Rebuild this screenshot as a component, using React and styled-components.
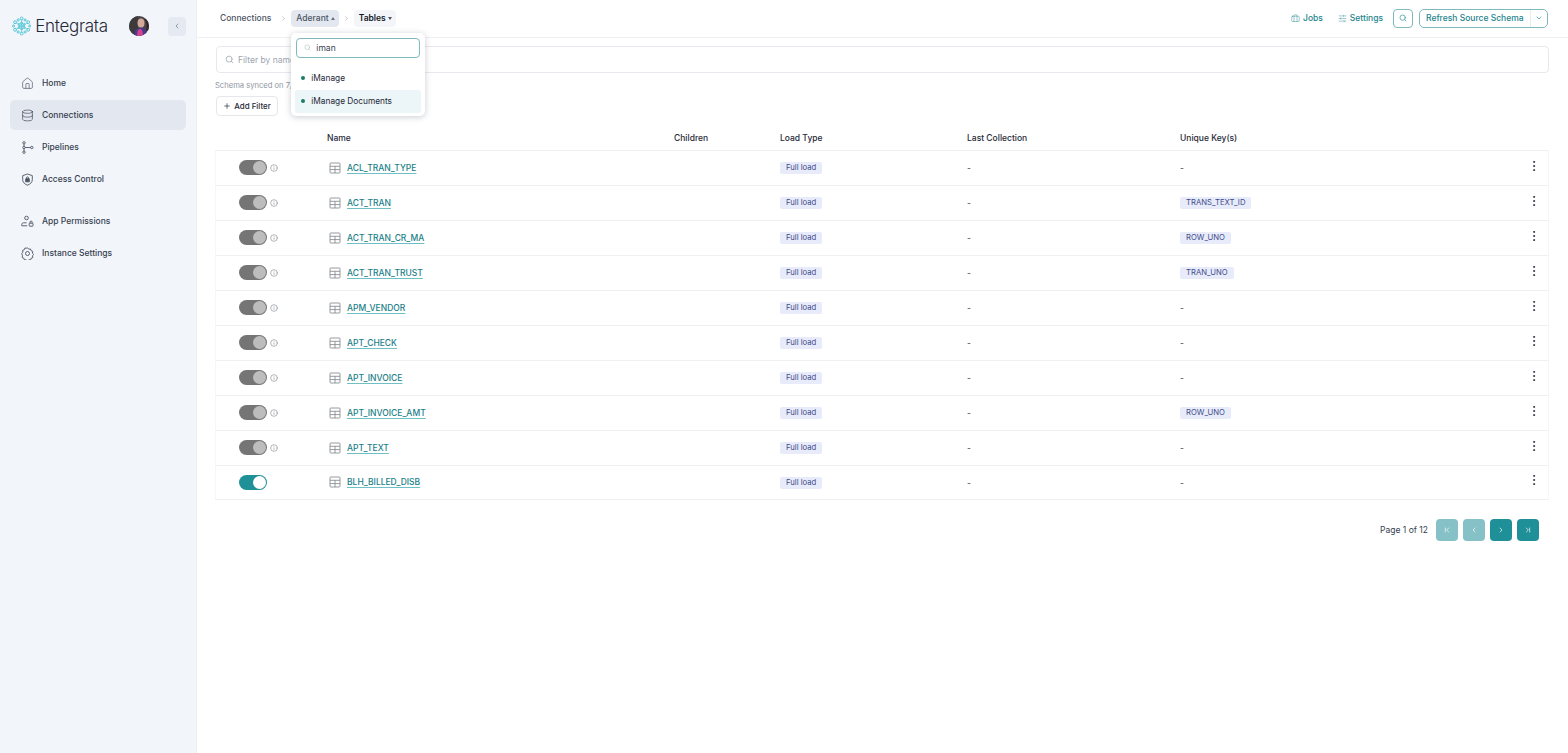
import React from "react";
import styled, { createGlobalStyle } from "styled-components";
import {
  Home,
  Database,
  ChevronLeft,
  ChevronRight,
  ChevronDown,
  ChevronFirst,
  ChevronLast,
  Search,
  Plus,
  Info,
  Briefcase,
  SlidersHorizontal,
  EllipsisVertical,
} from "lucide-react";

const GlobalStyle = createGlobalStyle`
  html, body { margin: 0; padding: 0; height: 100%; }
  body { font-family: Inter, "Liberation Sans", sans-serif; background: #fff; color: #1f2937; }
  #root { height: 100%; }
  * { box-sizing: border-box; }
`;

const Page = styled.div`
  display: flex;
  height: 753px;
  overflow: hidden;
`;

const Sidebar = styled.aside`
  width: 197px;
  flex: none;
  background: #f2f5fa;
  border-right: 1px solid #eceff4;
  padding: 14px 10px 0;
`;

const Brand = styled.div`
  display: flex;
  align-items: center;
  height: 24px;
  margin: 0 0 0 2px;
`;

const BrandName = styled.span`
  font-size: 17px;
  font-weight: 300;
  color: #1f2937;
  margin: -1px 0 0 4px;
  letter-spacing: -0.3px;
`;

const Avatar = styled.svg`
  width: 20px;
  height: 20px;
  margin-left: 21px;
  border-radius: 50%;
  flex: none;
`;

const Collapse = styled.button`
  width: 19px;
  height: 19px;
  margin-left: 19px;
  border: 0;
  border-radius: 4px;
  background: #e5e9f1;
  color: #6b7280;
  display: flex;
  align-items: center;
  justify-content: center;
  padding: 0;
`;

const Nav = styled.nav`
  margin-top: 30px;
  display: flex;
  flex-direction: column;
  gap: 2px;
`;

const NavItem = styled.a`
  display: flex;
  align-items: center;
  height: 30px;
  padding-left: 11px;
  gap: 8px;
  border-radius: 5px;
  font-size: 8.5px;
  font-weight: 500;
  color: #374151;
  background: ${(p) => (p.$active ? "#e3e7f0" : "transparent")};
`;

const NavDivider = styled.div`
  height: 8px;
`;

const Main = styled.main`
  flex: 1;
  min-width: 0;
  display: flex;
  flex-direction: column;
`;

const Topbar = styled.header`
  height: 38px;
  flex: none;
  border-bottom: 1px solid #eef0f3;
  display: flex;
  align-items: center;
  padding: 0 20px 1px 18px;
`;

const Crumbs = styled.div`
  display: flex;
  align-items: center;
  font-size: 8.5px;
  font-weight: 500;
`;

const CrumbLink = styled.span`
  padding: 0 5px;
  color: #4b5563;
`;

const CrumbSep = styled.span`
  display: flex;
  width: 15px;
  justify-content: center;
  color: #9ca3af;
`;

const CrumbMenu = styled.div`
  position: relative;
`;

const CrumbButton = styled.span`
  display: flex;
  align-items: center;
  gap: 2px;
  height: 17px;
  padding: 0 4px 0 5px;
  border-radius: 4px;
  background: ${(p) => (p.$open ? "#e3e7f0" : "#f3f5f9")};
  color: ${(p) => (p.$open ? "#4b5563" : "#111827")};
  font-weight: ${(p) => (p.$open ? 500 : 600)};
`;

const Caret = styled.span`
  width: 0;
  height: 0;
  border-left: 2px solid transparent;
  border-right: 2px solid transparent;
  ${(p) => (p.$up ? "border-bottom: 3px solid #6b7280;" : "border-top: 3px solid #4b5563;")}
`;

const Actions = styled.div`
  margin-left: auto;
  display: flex;
  align-items: center;
  font-size: 8.5px;
  font-weight: 500;
  color: #23848c;
`;

const ActionLink = styled.span`
  display: flex;
  align-items: center;
  gap: 3px;
  margin-right: ${(p) => p.$gap}px;
`;

const IconButton = styled.button`
  width: 20px;
  height: 19px;
  padding: 0;
  border: 1px solid #7fb9bd;
  border-radius: 4px;
  background: #fff;
  color: #2a8f98;
  display: flex;
  align-items: center;
  justify-content: center;
  margin-right: 6px;
`;

const SplitButton = styled.div`
  display: flex;
  align-items: center;
  height: 19px;
  width: 129px;
  border: 1px solid #7fb9bd;
  border-radius: 5px;
  padding-left: 6px;
  justify-content: space-between;
  white-space: nowrap;
`;

const SplitCaret = styled.span`
  display: flex;
  width: 17px;
  height: 17px;
  align-items: center;
  justify-content: center;
  border-left: 1px solid #e3eeef;
`;

const Content = styled.div`
  padding: 8px 19px 0 18px;
`;

const FilterBox = styled.div`
  height: 27px;
  margin-left: 1px;
  border: 1px solid #e7e9ee;
  border-radius: 4px;
  display: flex;
  align-items: center;
  padding-left: 8px;
  gap: 4px;
  font-size: 8.5px;
  color: #9ca3af;
`;

const Synced = styled.div`
  margin-top: 8px;
  font-size: 7.6px;
  line-height: 10px;
  color: #8f96a1;
`;

const AddFilter = styled.button`
  margin: 5px 0 0 1px;
  height: 20px;
  width: 62px;
  padding: 0;
  border: 1px solid #e5e7eb;
  border-radius: 4px;
  background: #fff;
  display: flex;
  align-items: center;
  justify-content: center;
  gap: 3px;
  font: 500 7.9px Inter, sans-serif;
  color: #1f2937;
`;

const columns = "112px 347px 106px 187px 213px 1fr 22px";

const HeadRow = styled.div`
  margin-top: 14px;
  height: 20px;
  padding-bottom: 5px;
  display: grid;
  grid-template-columns: ${columns};
  align-items: center;
  font-size: 8.5px;
  font-weight: 500;
  color: #1f2937;
`;

const Table = styled.div`
  border-top: 1px solid #eef0f3;
  border-left: 1px solid #f6f7f9;
  border-right: 1px solid #f6f7f9;
`;

const Row = styled.div`
  height: 35px;
  display: grid;
  grid-template-columns: ${columns};
  align-items: center;
  border-bottom: 1px solid #eef0f3;
  margin-left: -1px;
  margin-right: -1px;
  font-size: 8.5px;
  color: #374151;
  &:last-child { height: 34px; }
`;

const ToggleCell = styled.div`
  display: flex;
  align-items: center;
  gap: 3px;
  padding-left: 24px;
  margin-top: -1px;
  color: #8b8f96;
`;

const Track = styled.div`
  width: 28px;
  height: 15px;
  border-radius: 8px;
  padding: 1px;
  display: flex;
  justify-content: flex-end;
  background: ${(p) => (p.$on ? "#1f9097" : "#757575")};
`;

const Knob = styled.div`
  width: 13px;
  height: 13px;
  border-radius: 50%;
  background: ${(p) => (p.$on ? "#fff" : "#bdbdbd")};
`;

const NameCell = styled.div`
  display: flex;
  align-items: center;
  gap: 6px;
  padding-left: 2px;
  margin-top: -1px;
  color: #7d8187;
`;

const TableIcon = styled.svg`
  width: 12px;
  height: 12px;
  flex: none;
`;

const TableLink = styled.a`
  font-size: 8.5px;
  font-weight: 500;
  color: #1b7f88;
  text-decoration: underline;
  text-decoration-color: #6fbfc4;
  text-underline-offset: 2px;
`;

const Tag = styled.span`
  display: inline-block;
  height: 12px;
  line-height: 12px;
  padding: 0 6px;
  border-radius: 2px;
  background: #e8ebfa;
  color: #3f4a8a;
  font-size: 7.7px;
`;

const Dots = styled.div`
  display: flex;
  margin-top: -5px;
  color: #1f2937;
`;

const Pager = styled.div`
  display: flex;
  align-items: center;
  justify-content: flex-end;
  gap: 5px;
  margin-top: 19px;
  padding-right: 10px;
  font-size: 8.5px;
  color: #374151;
`;

const PagerLabel = styled.span`
  margin-right: 3px;
`;

const PageButton = styled.button`
  width: 22px;
  height: 22px;
  padding: 0;
  border: 0;
  border-radius: 4px;
  background: ${(p) => (p.disabled ? "#85c1c6" : "#1f9097")};
  color: #fff;
  display: flex;
  align-items: center;
  justify-content: center;
`;

const Dropdown = styled.div`
  position: absolute;
  top: 23px;
  left: 0;
  width: 134px;
  height: 83px;
  background: #fff;
  border-radius: 5px;
  box-shadow: 0 1px 6px rgba(60, 70, 90, 0.28);
  padding: 5px 4px;
  z-index: 5;
`;

const DropSearch = styled.div`
  height: 20px;
  margin: 0 1px;
  border: 1px solid #7fb9bd;
  border-radius: 4px;
  display: flex;
  align-items: center;
  gap: 5px;
  padding-left: 7px;
  color: #b6bcc4;
  font-size: 8.5px;
  font-weight: 400;
`;

const DropText = styled.span`
  color: #374151;
`;

const DropItem = styled.div`
  height: 23px;
  margin-top: ${(p) => (p.$first ? "9px" : "0")};
  border-radius: 3px;
  display: flex;
  align-items: center;
  gap: 6px;
  padding-left: 6px;
  font-size: 8.3px;
  font-weight: 400;
  color: #1f2937;
  background: ${(p) => (p.$active ? "#ecf5f7" : "transparent")};
`;

const Dot = styled.span`
  width: 4px;
  height: 4px;
  border-radius: 50%;
  background: #1c7c66;
`;

const Logo = () => (
  <svg width="20" height="20" viewBox="0 0 20 20" fill="none" stroke="#4cc4d4" strokeWidth="1">
    <path d="M10 3v14M3.900 6.500l12.200 7M3.900 13.500l12.200-7" strokeWidth="0.7" />
    <circle cx="10" cy="2.200" r="1.500" />
    <circle cx="10" cy="17.800" r="1.500" />
    <circle cx="3.200" cy="6.100" r="1.500" />
    <circle cx="16.800" cy="6.100" r="1.500" />
    <circle cx="3.200" cy="13.900" r="1.500" />
    <circle cx="16.800" cy="13.900" r="1.500" />
    <circle cx="6.400" cy="3.800" r="1.100" />
    <circle cx="13.600" cy="3.800" r="1.100" />
    <circle cx="6.400" cy="16.200" r="1.100" />
    <circle cx="13.600" cy="16.200" r="1.100" />
    <circle cx="1.600" cy="10" r="1.100" />
    <circle cx="18.400" cy="10" r="1.100" />
    <circle cx="10" cy="7" r="1.100" />
    <circle cx="10" cy="13" r="1.100" />
    <circle cx="7.400" cy="8.500" r="1.100" />
    <circle cx="12.600" cy="8.500" r="1.100" />
    <circle cx="7.400" cy="11.500" r="1.100" />
    <circle cx="12.600" cy="11.500" r="1.100" />
  </svg>
);

const PipelineIcon = () => (
  <svg width="13" height="13" viewBox="0 0 13 13" fill="none" stroke="#4b5563" strokeWidth="0.9">
    <circle cx="3" cy="1.800" r="1.200" />
    <circle cx="3" cy="6.500" r="1.200" />
    <circle cx="3" cy="11.200" r="1.200" />
    <circle cx="10.800" cy="6.500" r="1.200" />
    <path d="M3 3v2.300M3 7.700V10M4.200 6.500h5.400" />
  </svg>
);

const ShieldIcon = () => (
  <svg width="13" height="13" viewBox="0 0 13 13" fill="none" stroke="#4b5563" strokeWidth="0.9">
    <path d="M6.500 1 11.300 2.600V6.800c0 2.600-2.200 4.400-4.800 5.400C3.900 11.200 1.700 9.400 1.700 6.800V2.600Z" />
    <path d="M4.700 5.800h3.600v3H4.700Z" fill="#4b5563" />
    <circle cx="6.500" cy="5" r="1.100" />
  </svg>
);

const PermissionIcon = () => (
  <svg width="13" height="13" viewBox="0 0 13 13" fill="none" stroke="#4b5563" strokeWidth="0.9">
    <circle cx="5.500" cy="3" r="1.800" />
    <path d="M.8 10.800V9.500c0-1 .8-1.700 1.700-1.700h3M.8 10.800h5.400" />
    <rect x="8.200" y="8.200" width="3.800" height="3" rx=".5" />
    <path d="M9 8.200V7.200a1.100 1.100 0 0 1 2.200 0v1" />
  </svg>
);

const GearIcon = () => (
  <svg width="13" height="13" viewBox="0 0 13 13" fill="none" stroke="#4b5563" strokeWidth="0.9">
    <path d="M6.500.8l1.200 1.400 1.800-.2.600 1.700 1.700.7-.3 1.800 1.100 1.300-1.100 1.300.3 1.800-1.700.7-.6 1.700-1.800-.2-1.200 1.400-1.200-1.400-1.800.2-.6-1.700-1.700-.7.3-1.800L.8 6.500l1.100-1.300-.3-1.800 1.700-.7.600-1.700 1.800.2Z" />
    <circle cx="6.500" cy="6.500" r="2" />
  </svg>
);

const rows = [
  { name: "ACL_TRAN_TYPE", key: null },
  { name: "ACT_TRAN", key: "TRANS_TEXT_ID" },
  { name: "ACT_TRAN_CR_MA", key: "ROW_UNO" },
  { name: "ACT_TRAN_TRUST", key: "TRAN_UNO" },
  { name: "APM_VENDOR", key: null },
  { name: "APT_CHECK", key: null },
  { name: "APT_INVOICE", key: null },
  { name: "APT_INVOICE_AMT", key: "ROW_UNO" },
  { name: "APT_TEXT", key: null },
  { name: "BLH_BILLED_DISB", key: null, on: true },
];

export default function App() {
  return (
    <Page>
      <GlobalStyle />
      <Sidebar>
        <Brand>
          <Logo />
          <BrandName>Entegrata</BrandName>
          <Avatar viewBox="0 0 20 20">
            <rect width="20" height="20" fill="#4b4446" />
            <path d="M0 0h9v20H0Z" fill="#3d3a3c" />
            <ellipse cx="12" cy="7" rx="3.500" ry="4.500" fill="#d3a99c" />
            <path d="M5 20c0-6 3-8 7-8s6 2 6 8Z" fill="#4a3a8c" />
            <path d="M8 20c0-4 1-7 3-7s3 3 3 7Z" fill="#d9418f" />
            <path d="M15 3c3 3 3 8 2 12l3-1V4Z" fill="#33262a" />
          </Avatar>
          <Collapse>
            <ChevronLeft size={8} />
          </Collapse>
        </Brand>
        <Nav>
          <NavItem>
            <Home size={13} strokeWidth={1.1} />
            Home
          </NavItem>
          <NavItem $active>
            <Database size={13} strokeWidth={1.2} />
            Connections
          </NavItem>
          <NavItem>
            <PipelineIcon />
            Pipelines
          </NavItem>
          <NavItem>
            <ShieldIcon />
            Access Control
          </NavItem>
          <NavDivider />
          <NavItem>
            <PermissionIcon />
            App Permissions
          </NavItem>
          <NavItem>
            <GearIcon />
            Instance Settings
          </NavItem>
        </Nav>
      </Sidebar>
      <Main>
        <Topbar>
          <Crumbs>
            <CrumbLink>Connections</CrumbLink>
            <CrumbSep>
              <ChevronRight size={7} />
            </CrumbSep>
            <CrumbMenu>
              <CrumbButton $open>
                Aderant <Caret $up />
              </CrumbButton>
              <Dropdown>
                <DropSearch>
                  <Search size={7} />
                  <DropText>iman</DropText>
                </DropSearch>
                <DropItem $first>
                  <Dot />
                  iManage
                </DropItem>
                <DropItem $active>
                  <Dot />
                  iManage Documents
                </DropItem>
              </Dropdown>
            </CrumbMenu>
            <CrumbSep>
              <ChevronRight size={7} />
            </CrumbSep>
            <CrumbButton>
              Tables <Caret />
            </CrumbButton>
          </Crumbs>
          <Actions>
            <ActionLink $gap={15}>
              <Briefcase size={9} strokeWidth={1.2} />
              Jobs
            </ActionLink>
            <ActionLink $gap={10}>
              <SlidersHorizontal size={9} strokeWidth={1.2} />
              Settings
            </ActionLink>
            <IconButton>
              <Search size={8} />
            </IconButton>
            <SplitButton>
              Refresh Source Schema
              <SplitCaret>
                <ChevronDown size={8} />
              </SplitCaret>
            </SplitButton>
          </Actions>
        </Topbar>
        <Content>
          <FilterBox>
            <Search size={9} />
            Filter by name
          </FilterBox>
          <Synced>Schema synced on 7/31/2025</Synced>
          <AddFilter>
            <Plus size={8} />
            Add Filter
          </AddFilter>
          <HeadRow>
            <span />
            <span>Name</span>
            <span>Children</span>
            <span>Load Type</span>
            <span>Last Collection</span>
            <span>Unique Key(s)</span>
          </HeadRow>
          <Table>
            {rows.map((row) => (
              <Row key={row.name}>
                <ToggleCell>
                  <Track $on={row.on}>
                    <Knob $on={row.on} />
                  </Track>
                  {!row.on && <Info size={8} strokeWidth={2} />}
                </ToggleCell>
                <NameCell>
                  <TableIcon viewBox="0 0 12 12" fill="none" stroke="currentColor" strokeWidth="0.8">
                    <rect x="1" y="1" width="10" height="10" rx="0.8" />
                    <path d="M1 4.300h10M1 7.600h10M6 4.300V11" />
                  </TableIcon>
                  <TableLink>{row.name}</TableLink>
                </NameCell>
                <span />
                <span>
                  <Tag>Full load</Tag>
                </span>
                <span>-</span>
                <span>{row.key ? <Tag>{row.key}</Tag> : "-"}</span>
                <Dots>
                  <EllipsisVertical size={14} strokeWidth={1.5} />
                </Dots>
              </Row>
            ))}
          </Table>
          <Pager>
            <PagerLabel>Page 1 of 12</PagerLabel>
            <PageButton disabled>
              <ChevronFirst size={8} />
            </PageButton>
            <PageButton disabled>
              <ChevronLeft size={8} />
            </PageButton>
            <PageButton>
              <ChevronRight size={8} />
            </PageButton>
            <PageButton>
              <ChevronLast size={8} />
            </PageButton>
          </Pager>
        </Content>
      </Main>
    </Page>
  );
}
